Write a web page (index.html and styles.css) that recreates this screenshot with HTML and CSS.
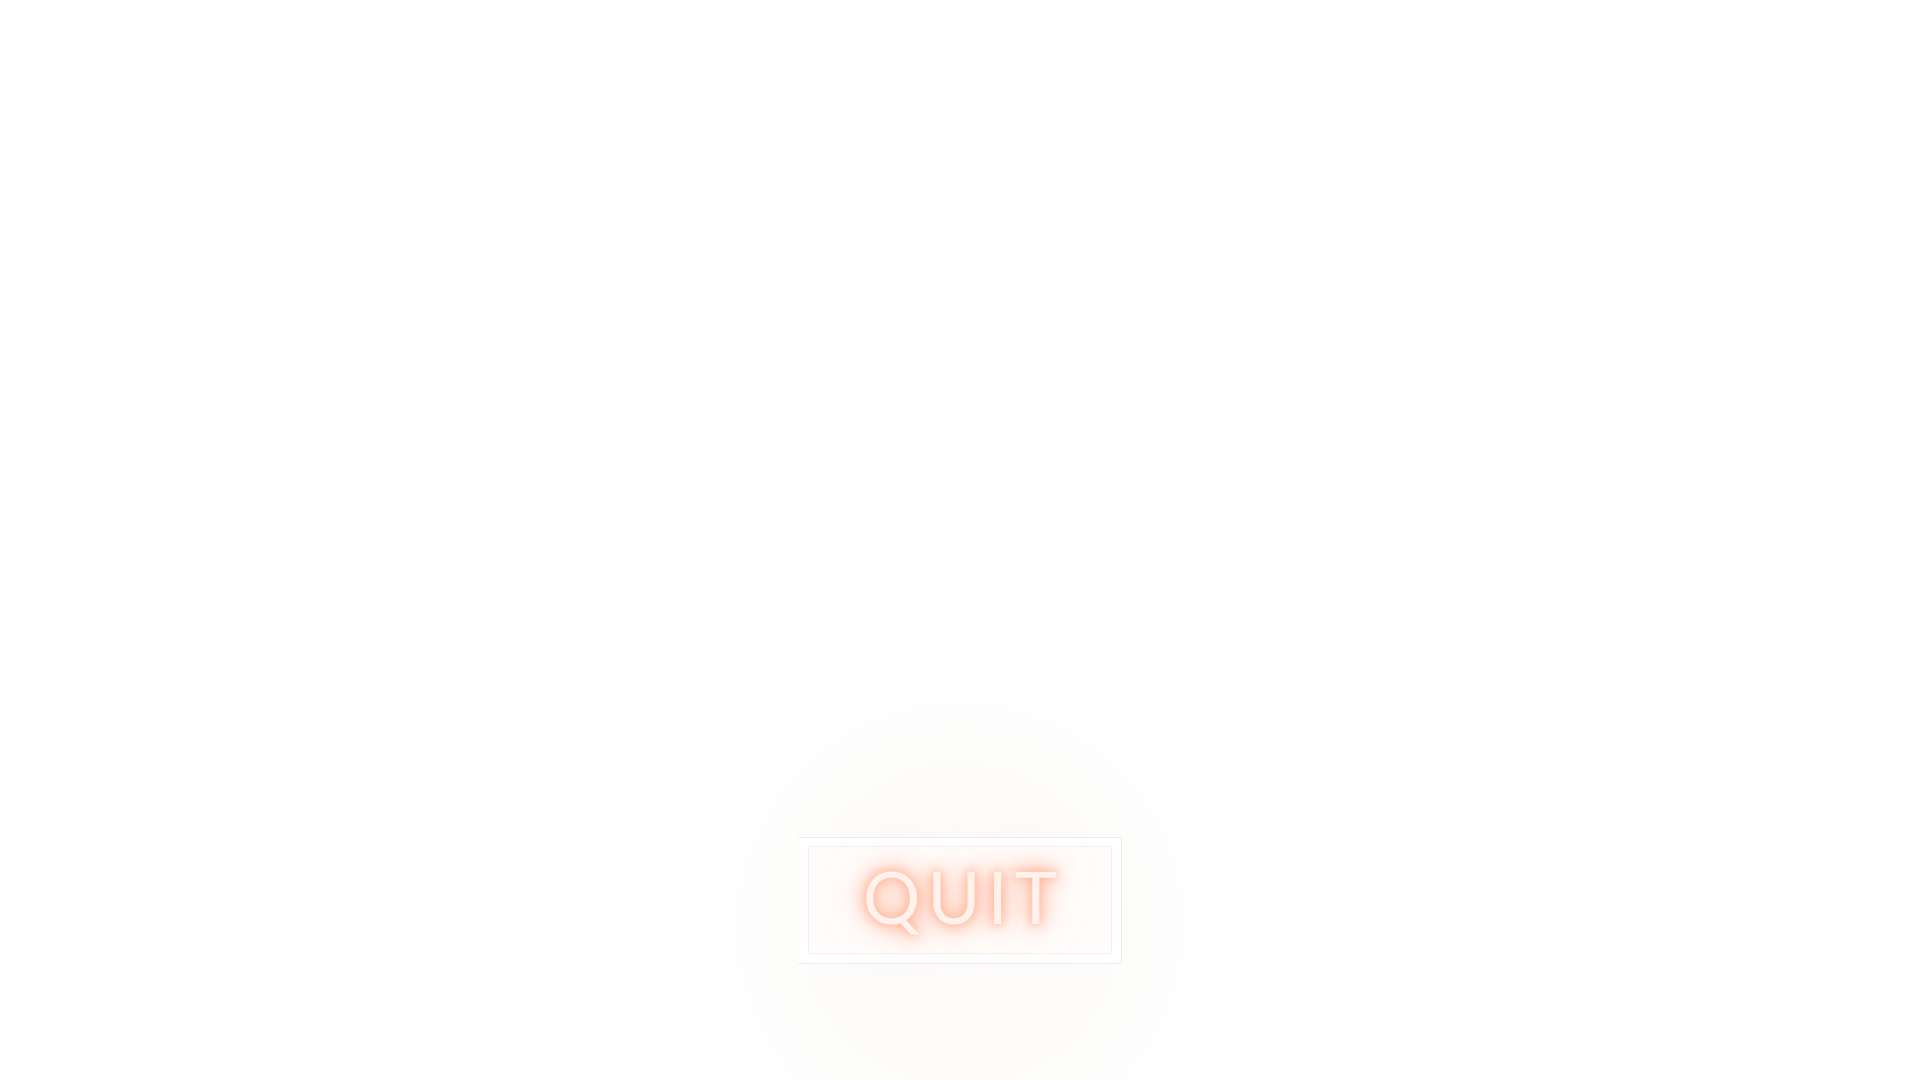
FILE: index.html
```html
<!DOCTYPE html>
<html lang="en">
<head>
<meta charset="utf-8">
<title>Quit</title>
<link rel="stylesheet" href="styles.css">
</head>
<body>
  <main class="stage">
    <button class="quit-btn" type="button">
      <span class="quit-inner"><span class="quit-label">QUIT</span></span>
    </button>
  </main>
</body>
</html>
```

FILE: styles.css
```css
html, body {
  margin: 0;
  padding: 0;
  background: #ffffff;
}

.stage {
  width: 1920px;
  height: 1080px;
  overflow: hidden;
  display: flex;
  flex-direction: column;
  align-items: center;
  padding-top: 837px;
  box-sizing: border-box;
  background: radial-gradient(circle 250px at 960px 925px,
    #fcfbfa 0%, #fcfbfa 45%, #fdfcfb 60%, #fdfdfc 75%, #fefefe 90%, #ffffff 100%);
}

.quit-btn {
  width: 324px;
  height: 127px;
  box-sizing: border-box;
  padding: 8px 9px 9px 9px;
  margin: 0;
  background: #ffffff;
  border-top: 1px solid #ecebee;
  border-right: 1px solid #ecebee;
  border-bottom: 1px solid #ecebee;
  border-left: 1px solid #fbfbfb;
  cursor: pointer;
  display: flex;
}

.quit-inner {
  flex: 1;
  display: flex;
  align-items: center;
  justify-content: center;
  border: 1px solid #f3f1f2;
  background: #fffcfb;
}

.quit-label {
  font-family: "Lato", "Liberation Sans", sans-serif;
  font-weight: 400;
  font-size: 72px;
  line-height: 1;
  letter-spacing: 7px;
  margin-right: -7px;
  margin-top: -9px;
  color: #fff1eb;
  text-shadow:
    0 0 8px rgba(255, 180, 150, 0.95),
    0 0 16px rgba(255, 170, 138, 0.9),
    0 0 26px rgba(255, 175, 145, 0.85),
    0 0 40px rgba(255, 195, 170, 0.6);
}
```
